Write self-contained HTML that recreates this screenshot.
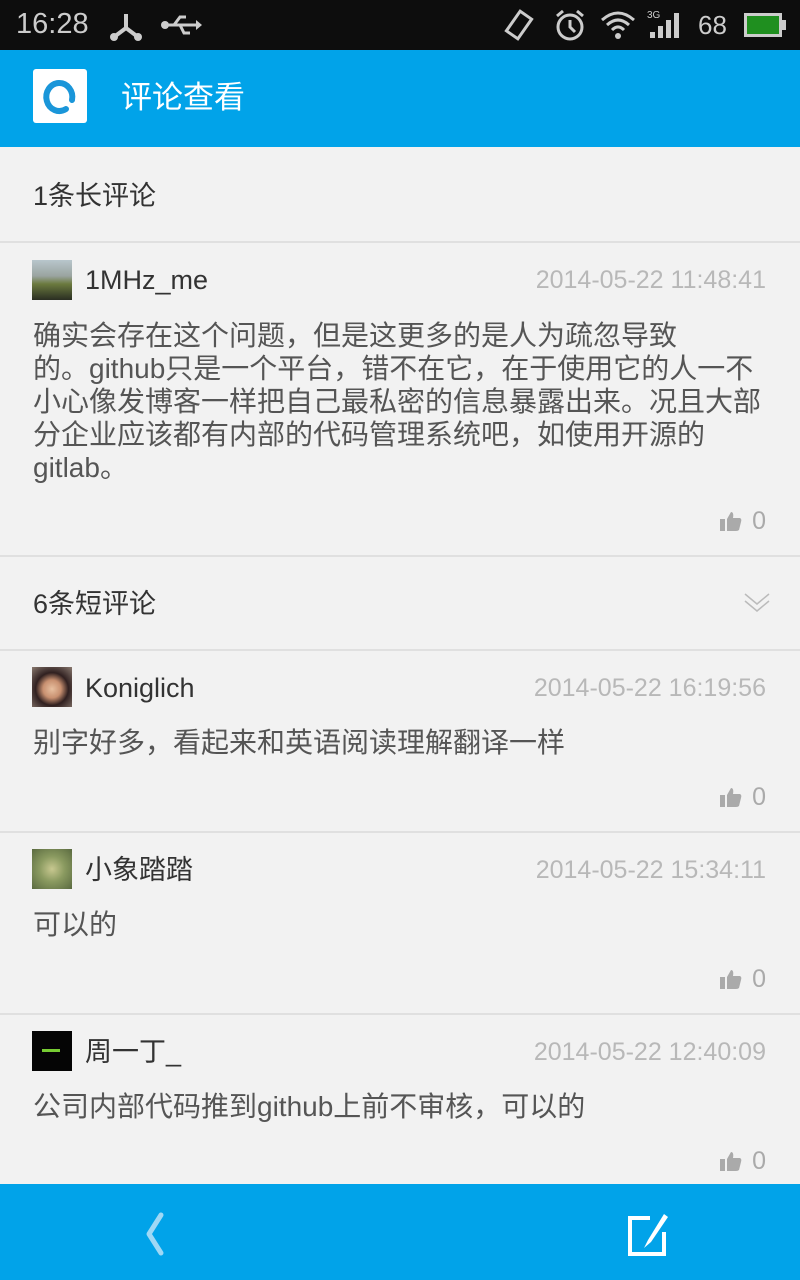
<!DOCTYPE html>
<html><head><meta charset="utf-8"><style>
*{margin:0;padding:0;box-sizing:border-box}
body{width:800px;height:1280px;background:#f2f2f2;font-family:"Liberation Sans","Noto Sans CJK SC",sans-serif;position:relative;overflow:hidden}
.abs{position:absolute}
.sb{top:0;left:0;width:800px;height:50px;background:#0d0d0d;color:#ccc}
.hd{top:50px;left:0;width:800px;height:97px;background:#01a3e9}
.bt{top:1184px;left:0;width:800px;height:96px;background:#01a3e9}
.line{left:0;width:800px;height:2px;background:#e0e0e0}
.sec{left:33px;font-size:27px;color:#333;line-height:32px}
.av{left:32px;width:40px;height:40px}
.nm{left:85px;font-size:27px;color:#333;line-height:32px}
.dt{right:34px;font-size:25px;color:#b8b8b8;line-height:30px}
.tx{left:33px;font-size:28px;color:#555;line-height:33px;width:767px;white-space:nowrap}
.lk{right:34px;font-size:25px;color:#aaa;display:flex;align-items:center;gap:10px;line-height:30px}
</style></head><body>
<div class="abs sb">
<div class="abs" style="left:16px;top:8px;font-size:29px;color:#ccc">16:28</div>
<svg class="abs" style="left:108px;top:10px" width="36" height="32" viewBox="0 0 36 32"><g fill="#ccc" stroke="#ccc" stroke-width="4"><line x1="18" y1="4" x2="18" y2="18"/><line x1="18" y1="18" x2="6" y2="27"/><line x1="18" y1="18" x2="30" y2="27"/></g><circle cx="6" cy="27" r="4" fill="#ccc"/><circle cx="30" cy="27" r="4" fill="#ccc"/></svg>
<svg class="abs" style="left:160px;top:12px" width="42" height="26" viewBox="0 0 42 26"><g stroke="#ccc" stroke-width="3" fill="none"><line x1="4" y1="13" x2="38" y2="13"/><path d="M14 13 L20 5 H26 M20 13 L24 21 H30"/></g><circle cx="5" cy="13" r="4" fill="#ccc"/><path d="M36 8 L42 13 L36 18Z" fill="#ccc"/></svg>
<svg class="abs" style="left:500px;top:8px" width="36" height="34"><g stroke="#ccc" stroke-width="3" fill="none"><rect x="12" y="5" width="14" height="24" transform="rotate(35 19 17)"/></g></svg>
<svg class="abs" style="left:553px;top:8px" width="34" height="34"><circle cx="17" cy="19" r="12" stroke="#ccc" stroke-width="3" fill="none"/><path d="M17 12 V19 L22 24" stroke="#ccc" stroke-width="3" fill="none"/><path d="M4 8 L10 3 M30 8 L24 3" stroke="#ccc" stroke-width="3"/></svg>
<svg class="abs" style="left:600px;top:10px" width="36" height="30"><path d="M2 10 Q18 -4 34 10" stroke="#ccc" stroke-width="3" fill="none"/><path d="M7 15 Q18 5 29 15" stroke="#ccc" stroke-width="3" fill="none"/><path d="M12 20 Q18 14 24 20" stroke="#ccc" stroke-width="3" fill="none"/><circle cx="18" cy="26" r="3" fill="#ccc"/></svg>
<div class="abs" style="left:647px;top:10px;font-size:10px;color:#ccc">3G</div>
<svg class="abs" style="left:648px;top:10px" width="40" height="30"><rect x="2" y="22" width="5" height="6" fill="#ccc"/><rect x="10" y="16" width="5" height="12" fill="#ccc"/><rect x="18" y="10" width="5" height="18" fill="#ccc"/><rect x="26" y="3" width="5" height="25" fill="#ccc"/></svg>
<div class="abs" style="left:698px;top:10px;font-size:26px;color:#ccc">68</div>
<div class="abs" style="left:744px;top:13px;width:38px;height:24px;border:3px solid #ccc;background:#1f8f1f"></div>
<div class="abs" style="left:782px;top:20px;width:4px;height:10px;background:#ccc"></div>
</div>
<div class="abs hd">
<div class="abs" style="left:33px;top:19px;width:54px;height:54px;background:#fff;border-radius:3px"></div>
<svg class="abs" style="left:33px;top:19px" width="54" height="54"><path d="M33 40 A13 14 0 1 1 39 31" stroke="#1a96d9" stroke-width="6" fill="none" stroke-linecap="round"/></svg>
<div class="abs" style="left:121px;top:28px;font-size:31px;color:#fff;line-height:40px">评论查看</div>
</div>
<div class="abs sec" style="top:180px">1条长评论</div>
<div class="abs line" style="top:241px"></div>
<div class="abs av" style="top:260px;background:linear-gradient(#b8c6cc 0,#9aa4a0 40%,#6b7a3e 60%,#2a2e22 100%)"></div>
<div class="abs nm" style="top:264px">1MHz_me</div>
<div class="abs dt" style="top:265px">2014-05-22 11:48:41</div>
<div class="abs tx" style="top:319px">确实会存在这个问题，但是这更多的是人为疏忽导致<br>的。github只是一个平台，错不在它，在于使用它的人一不<br>小心像发博客一样把自己最私密的信息暴露出来。况且大部<br>分企业应该都有内部的代码管理系统吧，如使用开源的<br>gitlab。</div>
<div class="abs lk" style="top:506px"><svg width="22" height="22" viewBox="0 0 22 22"><rect x="0" y="9" width="5" height="12" fill="#aaa"/><path d="M7 9 L11 2 Q14 2 13 8 H20 Q22 9 21 12 L19 20 Q18 21 16 21 H7Z" fill="#aaa"/></svg>0</div>
<div class="abs line" style="top:555px"></div>
<div class="abs sec" style="top:588px">6条短评论</div>
<svg class="abs" style="left:744px;top:592px" width="26" height="24"><path d="M1 2 L13 12 L25 2 M1 9 L13 19 L25 9" stroke="#bbb" stroke-width="1.5" fill="none"/></svg>
<div class="abs line" style="top:649px"></div>

<div class="abs av" style="top:667px;background:radial-gradient(circle at 50% 55%,#e8c0a0 0,#c89070 30%,#302020 55%,#8a7a70 100%)"></div>
<div class="abs nm" style="top:672px">Koniglich</div>
<div class="abs dt" style="top:673px">2014-05-22 16:19:56</div>
<div class="abs tx" style="top:726px">别字好多，看起来和英语阅读理解翻译一样</div>
<div class="abs lk" style="top:782px"><svg width="22" height="22" viewBox="0 0 22 22"><rect x="0" y="9" width="5" height="12" fill="#aaa"/><path d="M7 9 L11 2 Q14 2 13 8 H20 Q22 9 21 12 L19 20 Q18 21 16 21 H7Z" fill="#aaa"/></svg>0</div>
<div class="abs line" style="top:831px"></div>

<div class="abs av" style="top:849px;background:radial-gradient(circle at 50% 50%,#c8c890 0,#8a9a60 45%,#5a6a40 100%)"></div>
<div class="abs nm" style="top:854px">小象踏踏</div>
<div class="abs dt" style="top:855px">2014-05-22 15:34:11</div>
<div class="abs tx" style="top:908px">可以的</div>
<div class="abs lk" style="top:964px"><svg width="22" height="22" viewBox="0 0 22 22"><rect x="0" y="9" width="5" height="12" fill="#aaa"/><path d="M7 9 L11 2 Q14 2 13 8 H20 Q22 9 21 12 L19 20 Q18 21 16 21 H7Z" fill="#aaa"/></svg>0</div>
<div class="abs line" style="top:1013px"></div>

<div class="abs av" style="top:1031px;background:#050505"><div class="abs" style="left:10px;top:18px;width:18px;height:3px;background:#7c3"></div></div>
<div class="abs nm" style="top:1036px">周一丁_</div>
<div class="abs dt" style="top:1037px">2014-05-22 12:40:09</div>
<div class="abs tx" style="top:1090px">公司内部代码推到github上前不审核，可以的</div>
<div class="abs lk" style="top:1146px"><svg width="22" height="22" viewBox="0 0 22 22"><rect x="0" y="9" width="5" height="12" fill="#aaa"/><path d="M7 9 L11 2 Q14 2 13 8 H20 Q22 9 21 12 L19 20 Q18 21 16 21 H7Z" fill="#aaa"/></svg>0</div>

<div class="abs bt">
<svg class="abs" style="left:136px;top:26px" width="36" height="48"><path d="M25 5 L13 24 L25 43" stroke="#9fd8f5" stroke-width="5" fill="none" stroke-linecap="round" stroke-linejoin="round"/></svg>
<svg class="abs" style="left:624px;top:24px" width="50" height="50"><path d="M26 10 H6 V46 H40 V24" stroke="#fff" stroke-width="4" fill="none"/><path d="M40 6 L24 32 L20 40 L27 34 L44 9Z" fill="#fff"/></svg>
</div>
</body></html>
